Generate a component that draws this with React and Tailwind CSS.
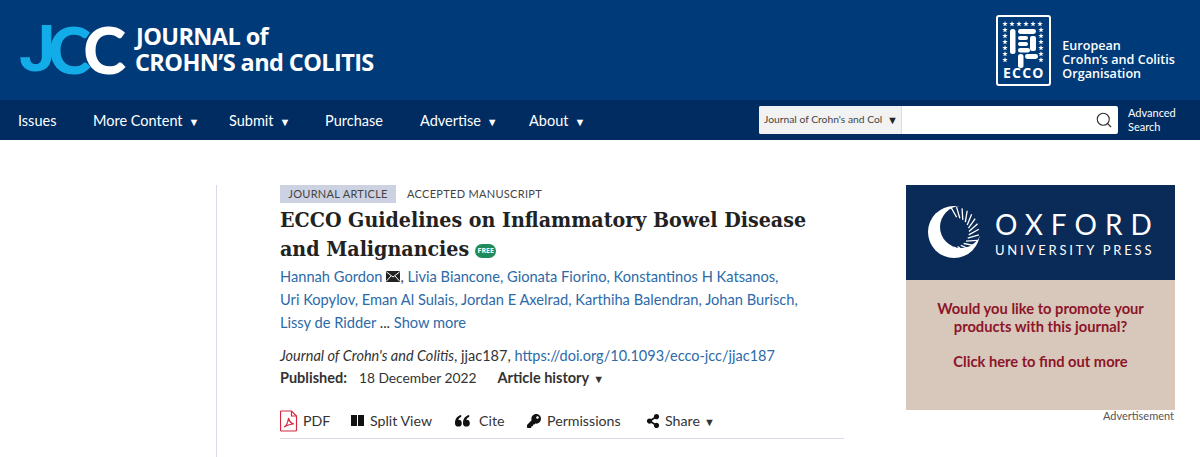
import React from 'react';
import { Search } from 'lucide-react';
import { FaKey, FaShareAlt } from 'react-icons/fa';

const sans = 'font-["Lato","Liberation_Sans",sans-serif]';

function Caret({ className = '' }) {
  return <span className={`inline-block ml-[6px] text-[11px] align-[0px] ${className}`}>▼</span>;
}

function Star({ x, y }) {
  return <polygon transform={`translate(${x} ${y}) scale(2.9)`} points="0,-1 0.24,-0.31 0.95,-0.31 0.38,0.12 0.59,0.81 0,0.4 -0.59,0.81 -0.38,0.12 -0.95,-0.31 -0.24,-0.31" fill="#fff" />;
}

function EccoLogo() {
  const top = [8, 15, 22, 29, 36, 43];
  const side = [14, 20, 26, 32, 38, 44];
  return (
    <div className="relative w-[55px] h-[71px] border-2 border-white rounded-[3px]">
      <svg width="51" height="52" viewBox="0 0 51 52" className="absolute left-0 top-0">
        {top.map(x => <Star key={x} x={x - 1} y={7} />)}
        {side.map(y => <Star key={y} x={7} y={y - 1} />)}
        {side.map(y => <Star key={y} x={43} y={y - 1} />)}
        <rect x="12" y="12" width="5.5" height="25" rx="2.5" fill="#fff" />
        <rect x="20" y="12" width="18" height="5" rx="2.4" fill="#fff" />
        <rect x="20" y="19" width="10" height="4" rx="2" fill="#fff" />
        <rect x="20" y="25" width="10" height="4" rx="2" fill="#fff" />
        <rect x="32" y="19" width="6" height="15" rx="2" fill="#fff" />
        <rect x="20" y="31" width="12" height="4.5" rx="2.2" fill="#fff" />
        <rect x="20" y="37" width="5.5" height="14" rx="2.5" fill="#fff" />
        <rect x="27" y="37" width="13" height="5" rx="2.4" fill="#fff" />
      </svg>
      <span className='absolute left-0 right-0 bottom-[2px] text-center text-white font-["Open_Sans",sans-serif] font-bold text-[14px] leading-[18px] tracking-[1.2px]'>ECCO</span>
    </div>
  );
}

function OupLogo() {
  const ticks = [];
  for (let i = 0; i < 15; i++) {
    const a = (-80 + i * 13) * Math.PI / 180;
    ticks.push(
      <line key={i}
        x1={26 + 15 * Math.cos(a)} y1={26 + 15 * Math.sin(a)}
        x2={26 + 25 * Math.cos(a - 0.3)} y2={26 + 25 * Math.sin(a - 0.3)}
        stroke="#fff" strokeWidth="1.3" />
    );
  }
  return (
    <svg width="53" height="53" viewBox="0 0 53 53" className="shrink-0">
      <circle cx="26" cy="26" r="26" fill="#fff" />
      <circle cx="33" cy="21" r="21" fill="#0a2a57" />
      {ticks}
    </svg>
  );
}

function Pdf() {
  return (
    <svg width="18" height="22" viewBox="0 0 18 22" fill="none" stroke="#d6293e" strokeWidth="1.2">
      <path d="M1.5 1h10l5 5v14a1 1 0 0 1-1 1h-14a1 1 0 0 1-1-1V2a1 1 0 0 1 1-1z" />
      <path d="M11.5 1v5h5" />
      <path d="M4 17c2-1 4-5 4.5-9 .8 3.5 2.5 5.5 5.5 6-3-.2-6 .8-10 3z" />
    </svg>
  );
}

function Mail() {
  return (
    <svg width="14" height="11" viewBox="0 0 14 11" className="inline-block ml-[4px] align-[0px]">
      <rect width="14" height="11" rx="1" fill="#222222" />
      <path d="M0.5 1 L7 6 L13.5 1 M0.5 10 L5 5 M13.5 10 L9 5" stroke="#fff" strokeWidth="1" fill="none" />
    </svg>
  );
}

function Quotes() {
  const q = 'M0 8.2a3.4 3.4 0 1 0 3.4-3.4c.1-1.2 1-2.3 2.8-2.9V0C2.600.6 0 3.600 0 8.200z';
  return (
    <svg width="15" height="12" viewBox="0 0 15 12" fill="#111111" className="ml-[22px]">
      <path d={q} />
      <path d={q} transform="translate(8 0)" />
    </svg>
  );
}

export default function App() {
  return (
    <div className={`w-[1200px] h-[457px] overflow-hidden bg-white ${sans}`}>
      <header className="h-[100px] bg-[#003a79] flex items-center justify-between pl-[19px] pr-[25px]">
        <div className="flex items-center">
          <div className='flex items-center font-["Lato",sans-serif] font-black text-[65px] leading-[66px] mt-[-2px] w-[103px]'>
            <span className="text-[#12ade8] font-['Roboto',sans-serif] font-bold">J</span>
            <span className="text-[#12ade8] ml-[-7px]">C</span>
            <span className="text-white ml-[-8px]">C</span>
          </div>
          <div className='ml-[13px] text-white font-["Open_Sans",sans-serif] font-bold text-[23.500px] leading-[26px] tracking-[-0.6px] mt-[-3px] whitespace-nowrap'>
            <div className="ml-[1px]">JOURNAL of</div>
            <div>CROHN’S and COLITIS</div>
          </div>
        </div>
        <div className="flex items-center gap-[11px]">
          <EccoLogo />
          <div className='text-white font-["Open_Sans",sans-serif] font-semibold text-[12.6px] leading-[14px] mt-[19px] whitespace-nowrap'>
            <div>European</div>
            <div>Crohn’s and Colitis</div>
            <div>Organisation</div>
          </div>
        </div>
      </header>

      <nav className="h-[40px] bg-[#002c61] flex items-center pl-[18px] pr-[24px] text-white text-[14.5px] whitespace-nowrap">
        <div className="flex items-center mt-[1px]">
          <span className="w-[75px]">Issues</span>
          <span className="w-[136px]">More Content<Caret /></span>
          <span className="w-[96px]">Submit<Caret /></span>
          <span className="w-[95px]">Purchase</span>
          <span className="w-[109px]">Advertise<Caret /></span>
          <span>About<Caret /></span>
        </div>
        <div className="ml-auto flex items-center">
          <div className="w-[359px] h-[28px] bg-white rounded-[2px] flex items-center">
            <div className="w-[143px] h-full bg-[#f2f2f2] rounded-l-[2px] border-r border-[#dddddd] flex items-center pl-[5px] text-[#444444] text-[10.3px]">
              <span className="w-[119px] shrink-0 overflow-hidden">Journal of Crohn's and Col</span>
              <span className="text-[11px] text-[#222222] ml-[4px]">▼</span>
            </div>
            <Search className="ml-auto mr-[5px] text-[#333333]" size={18} strokeWidth={1.5} />
          </div>
          <div className="ml-[10px] text-[11px] leading-[14px] w-[48px] whitespace-normal">Advanced Search</div>
        </div>
      </nav>

      <main className="flex pl-[216px] pt-[45px]">
        <div className="w-[628px] h-[272px] border-l border-[#d7dbe8] pl-[63px] mr-[62px]">
          <div className="flex items-center text-[11px] tracking-[0.3px] text-[#444444] h-[18px] whitespace-nowrap">
            <span className="bg-[#ccd2e2] h-[18px] w-[116px] text-center leading-[18px]">JOURNAL ARTICLE</span>
            <span className="ml-[11px]">ACCEPTED MANUSCRIPT</span>
          </div>
          <h1 className='mt-[2px] font-["DejaVu_Serif_Condensed","DejaVu_Serif",serif] font-bold text-[21.2px] leading-[29px] text-[#222222] whitespace-nowrap'>
            ECCO Guidelines on Inflammatory Bowel Disease<br />
            and Malignancies
            <span className='inline-block ml-[6px] align-[3px] w-[21px] h-[14px] rounded-full bg-[#1f8a5c] text-white font-["Open_Sans",sans-serif] text-[7px] leading-[14px] text-center font-bold'>FREE</span>
          </h1>
          <div className="text-[14.65px] leading-[23px] text-[#2c6aa8] mt-[2px] whitespace-nowrap">
            <div>Hannah Gordon<Mail /><span className="text-[#333333]">,</span> Livia Biancone, Gionata Fiorino, Konstantinos H Katsanos,</div>
            <div>Uri Kopylov, Eman Al Sulais, Jordan E Axelrad, Karthiha Balendran, Johan Burisch,</div>
            <div>Lissy de Ridder <span className="text-[#333333]">...</span> Show more</div>
          </div>
          <div className="mt-[11px] text-[14.5px] leading-[22px] text-[#333333] whitespace-nowrap">
            <i>Journal of Crohn's and Colitis</i>, jjac187, <span className="text-[#2c6aa8]">https://doi.org/10.1093/ecco-jcc/jjac187</span>
          </div>
          <div className="text-[14.5px] leading-[22px] text-[#333333] whitespace-nowrap">
            <b className="mr-[12px]">Published:</b><span className="text-[13.8px]">18 December 2022</span><b className="ml-[21px]">Article history</b><Caret className="!ml-[4px]" />
          </div>
          <div className="mt-[15px] h-[34px] pb-[2px] w-[564px] border-b border-[#d7dbe8] flex items-center text-[14.2px] text-[#333333] whitespace-nowrap">
            <Pdf />
            <span className="ml-[5px] w-[25px]">PDF</span>
            <span className="ml-[23px] flex gap-[1px]"><i className="block w-[6px] h-[11px] bg-[#111111]" /><i className="block w-[6px] h-[11px] bg-[#111111]" /></span>
            <span className="ml-[6px] w-[63px]">Split View</span>
            <Quotes />
            <span className="ml-[9px] w-[25px]">Cite</span>
            <FaKey className="ml-[23px] text-[#111111]" size={14} />
            <span className="ml-[6px] w-[76px]">Permissions</span>
            <FaShareAlt className="ml-[23px] text-[#111111]" size={14} />
            <span className="ml-[5px]">Share<Caret className="!ml-[4px]" /></span>
          </div>
        </div>

        <aside className="w-[269px]">
          <div className="h-[95px] bg-[#0a2a57] flex items-center pl-[22px] gap-[14px]">
            <OupLogo />
            <div className="text-white font-['Lato',sans-serif] whitespace-nowrap">
              <div className="text-[28px] leading-[32px] tracking-[8px] font-normal">OXFORD</div>
              <div className="text-[13px] leading-[16px] tracking-[2.8px] mt-[2px]">UNIVERSITY PRESS</div>
            </div>
          </div>
          <div className="h-[130px] bg-[#d8c7bb] text-[#8c1528] font-bold text-[14.7px] leading-[18px] text-center pt-[19px]">
            <div>Would you like to promote your</div>
            <div>products with this journal?</div>
            <div className="mt-[17px]">Click here to find out more</div>
          </div>
          <div className="text-right text-[11px] leading-[13px] text-[#555555] mt-[-1px] pr-[1px]">Advertisement</div>
        </aside>
      </main>
    </div>
  );
}
